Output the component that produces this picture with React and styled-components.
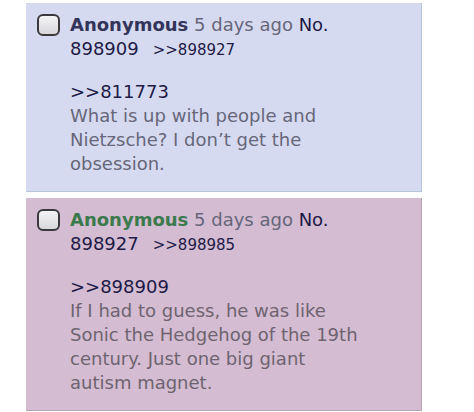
import React from "react";
import styled, { createGlobalStyle } from "styled-components";

const posts = [
  {
    no: "898909",
    reply: "898927",
    quote: "811773",
    text: "What is up with people and Nietzsche? I don’t get the obsession.",
    tone: "blue",
  },
  {
    no: "898927",
    reply: "898985",
    quote: "898909",
    text: "If I had to guess, he was like Sonic the Hedgehog of the 19th century. Just one big giant autism magnet.",
    tone: "pink",
  },
];

const tones = {
  blue: { bg: "#d6daf0", border: "#b7c5d9", name: "#33345a", text: "#66677a" },
  pink: { bg: "#d4bcd2", border: "#b9a2b9", name: "#3b7a4c", text: "#6e6470" },
};

export default function App() {
  return (
    <>
      <GlobalStyle />
      <Thread>
        {posts.map((post) => (
          <Post key={post.no} $tone={post.tone}>
            <Check />
            <Content>
              <Header>
                <Name $tone={post.tone}>Anonymous</Name> <Time>5 days ago</Time>{" "}
                <Num>No. {post.no}</Num>
                <BackLink>&gt;&gt;{post.reply}</BackLink>
              </Header>
              <Body $tone={post.tone}>
                <Quote>&gt;&gt;{post.quote}</Quote>
                {post.text}
              </Body>
            </Content>
          </Post>
        ))}
      </Thread>
    </>
  );
}

const GlobalStyle = createGlobalStyle`
  body {
    margin: 0;
    background: #fff;
    font-family: "DejaVu Sans", Verdana, sans-serif;
  }
`;

const Thread = styled.div`
  display: flex;
  flex-direction: column;
  gap: 6px;
  padding: 3px 0 0 26px;
`;

const Post = styled.div`
  display: flex;
  gap: 10px;
  width: 396px;
  box-sizing: border-box;
  padding: 10px 0 15px 11px;
  background: ${(p) => tones[p.$tone].bg};
  border-right: 1px solid ${(p) => tones[p.$tone].border};
  border-bottom: 1px solid ${(p) => tones[p.$tone].border};
`;

const Check = styled.div`
  flex: none;
  width: 23px;
  height: 22px;
  margin-top: 1px;
  box-sizing: border-box;
  border: 2px solid #3a3a3e;
  border-radius: 6px;
  background: linear-gradient(#f4f4f6, #d8d8dc);
`;

const Content = styled.div`
  max-width: 295px;
  font-size: 18px;
  line-height: 24px;
`;

const Header = styled.div``;

const Name = styled.span`
  font-weight: bold;
  color: ${(p) => tones[p.$tone].name};
`;

const Time = styled.span`
  color: #66667a;
`;

const Num = styled.span`
  color: #1e1a46;
`;

const BackLink = styled.span`
  margin-left: 14px;
  font-size: 15px;
  color: #1e1a46;
`;

const Body = styled.div`
  margin-top: 18px;
  color: ${(p) => tones[p.$tone].text};
`;

const Quote = styled.div`
  color: #1e1a46;
`;
